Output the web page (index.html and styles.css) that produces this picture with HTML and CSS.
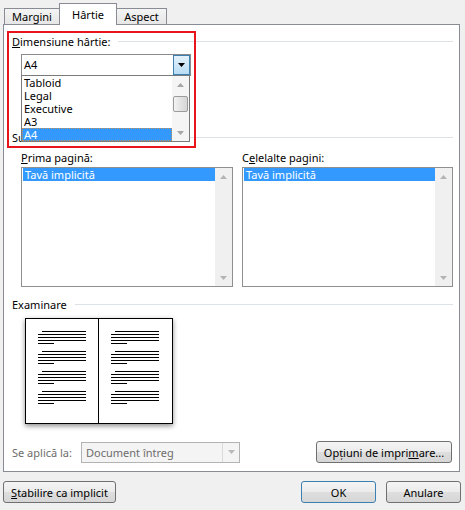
FILE: index.html
```html
<!DOCTYPE html>
<html lang="ro">
<head>
  <meta charset="UTF-8" />
  <title>Iniţializare pagină</title>
  <link rel="stylesheet" href="styles.css">
</head>
<body>
  <div class="tabs">
    <div class="tab tab-margini">Margini</div>
    <div class="tab tab-hartie active">Hârtie</div>
    <div class="tab tab-aspect">Aspect</div>
  </div>

  <div class="panel">
    <div class="group-title"><span><u>D</u>imensiune hârtie:</span><i class="rule"></i></div>

    <div class="combo-wrap">
      <div class="combo">
        <span class="combo-value">A4</span>
        <span class="combo-btn">
          <svg width="7" height="4" viewBox="0 0 7 4"><path d="M0 0H7L3.5 4z" fill="#000"/></svg>
        </span>
      </div>

      <!-- open dropdown, lies over the next group -->
      <div class="droplist">
        <ul class="items">
          <li>Tabloid</li>
          <li>Legal</li>
          <li>Executive</li>
          <li>A3</li>
          <li class="sel focus">A4</li>
        </ul>
        <div class="vscroll">
          <span class="arrow"><svg width="7" height="4" viewBox="0 0 7 4"><path d="M3.5 0L7 4H0z" fill="#a6a6a6"/></svg></span>
          <span class="thumb"></span>
          <span class="track"></span>
          <span class="arrow"><svg width="7" height="4" viewBox="0 0 7 4"><path d="M0 0H7L3.5 4z" fill="#a6a6a6"/></svg></span>
        </div>
      </div>
    </div>

    <div class="group-title source-title"><span>Sursă hârtie:</span><i class="rule"></i></div>

    <div class="trays">
      <div class="tray">
        <div class="tray-label"><u>P</u>rima pagină:</div>
        <div class="listbox">
          <ul class="items">
            <li class="sel">Tavă implicită</li>
          </ul>
          <div class="vscroll">
            <span class="arrow"><svg width="7" height="4" viewBox="0 0 7 4"><path d="M3.5 0L7 4H0z" fill="#b4b4b4"/></svg></span>
            <span class="track"></span>
            <span class="arrow"><svg width="7" height="4" viewBox="0 0 7 4"><path d="M0 0H7L3.5 4z" fill="#b4b4b4"/></svg></span>
          </div>
        </div>
      </div>
      <div class="tray">
        <div class="tray-label">C<u>e</u>lelalte pagini:</div>
        <div class="listbox">
          <ul class="items">
            <li class="sel">Tavă implicită</li>
          </ul>
          <div class="vscroll">
            <span class="arrow"><svg width="7" height="4" viewBox="0 0 7 4"><path d="M3.5 0L7 4H0z" fill="#b4b4b4"/></svg></span>
            <span class="track"></span>
            <span class="arrow"><svg width="7" height="4" viewBox="0 0 7 4"><path d="M0 0H7L3.5 4z" fill="#b4b4b4"/></svg></span>
          </div>
        </div>
      </div>
    </div>

    <div class="group-title preview-title"><span>Examinare</span><i class="rule"></i></div>

    <div class="book">
      <svg width="148" height="106" viewBox="0 0 148 106">
        <defs>
          <path id="para" d="M17 0.5h44M13 3.5h48M13 6.5h48M13 9.5h48M13 12.5h16" stroke="#000" stroke-width="1"/>
        </defs>
        <rect x="0.5" y="0.5" width="147" height="105" fill="#fff" stroke="#000"/>
        <path d="M73.5 0v106" stroke="#000"/>
        <use href="#para" x="0" y="13"/>
        <use href="#para" x="0" y="33"/>
        <use href="#para" x="0" y="53"/>
        <use href="#para" x="0" y="73"/>
        <use href="#para" x="73" y="13"/>
        <use href="#para" x="73" y="33"/>
        <use href="#para" x="73" y="53"/>
        <use href="#para" x="73" y="73"/>
      </svg>
    </div>

    <div class="apply-row">
      <span class="apply-label">Se aplică la:</span>
      <div class="combo disabled">
        <span class="combo-value">Document întreg</span>
        <span class="combo-btn">
          <svg width="7" height="4" viewBox="0 0 7 4"><path d="M0 0H7L3.5 4z" fill="#b9b9b9"/></svg>
        </span>
      </div>
      <button class="btn print-btn">Opțiuni de impri<u>m</u>are...</button>
    </div>

    <div class="highlight"></div>
  </div>

  <div class="footer">
    <button class="btn btn-default-set"><u>S</u>tabilire ca implicit</button>
    <span class="spacer"></span>
    <button class="btn btn-ok">OK</button>
    <button class="btn btn-cancel">Anulare</button>
  </div>
</body>
</html>
```

FILE: styles.css
```css
* {
  margin: 0;
  padding: 0;
  box-sizing: border-box;
}

html, body {
  width: 100%;
  height: 100%;
  overflow: hidden;
}

body {
  background: #f0f0f0;
  font-family: "Noto Sans", "Open Sans", sans-serif;
  font-size: 11px;
  color: #000;
}

u {
  text-decoration: underline;
  text-underline-offset: 1px;
}

ul {
  list-style: none;
}

/* tabs */

.tabs {
  display: flex;
  align-items: flex-end;
  height: 25px;
  padding-left: 4px;
  position: relative;
  z-index: 2;
}

.tab {
  height: 16px;
  margin-bottom: 1px;
  border: 1px solid #898c95;
  border-bottom: none;
  background: linear-gradient(#f4f4f4, #e6e6e6);
  display: flex;
  align-items: center;
  justify-content: center;
  line-height: 1;
}

.tab-margini {
  width: 56px;
}

.tab-hartie {
  width: 58px;
  margin-left: -1px;
}

.tab-aspect {
  width: 51px;
  margin-left: -1px;
}

.tab.active {
  height: 22px;
  margin-bottom: 0;
  background: #fff;
  align-items: flex-start;
  padding-top: 5px;
  position: relative;
  z-index: 1;
}

/* panel */

.panel {
  margin: -1px 0 0 3px;
  width: 457px;
  height: 448px;
  border: 1px solid #898c95;
  background: #fff;
  padding: 9px 6px 0 8px;
  position: relative;
}

.group-title {
  display: flex;
  align-items: center;
  height: 15px;
  line-height: 15px;
  white-space: nowrap;
}

.group-title .rule {
  flex: 1;
  height: 1px;
  margin-left: 8px;
  background: #dde2e7;
}

.source-title {
  margin-top: 54px;
}

.preview-title {
  margin-top: 10px;
}

/* combo boxes */

.combo-wrap {
  position: relative;
  margin: 5px 0 0 9px;
  width: 170px;
}

.combo {
  display: flex;
  align-items: stretch;
  height: 22px;
  border: 1px solid #8a8a8a;
  background: #fff;
}

.combo-value {
  flex: 1;
  padding-left: 2px;
  line-height: 20px;
  white-space: nowrap;
}

.combo-btn {
  width: 17px;
  margin-left: auto;
  border: 1px solid #3c7fb1;
  background: linear-gradient(#e3f2fb, #b9dcf3);
  display: flex;
  align-items: center;
  justify-content: center;
}

.combo.disabled {
  width: 159px;
  height: 21px;
  border-color: #b3b3b3;
  background: #f4f4f4;
  color: #6d6d6d;
}

.combo.disabled .combo-value {
  padding-left: 4px;
  line-height: 19px;
}

.combo.disabled .combo-btn {
  border: none;
  border-left: 1px solid #dadada;
  background: #f4f4f4;
}

.droplist {
  position: absolute;
  top: 21px;
  left: 0;
  width: 169px;
  height: 67px;
  border: 1px solid #7a7a7a;
  background: #fff;
  display: flex;
  z-index: 3;
}

.items {
  flex: 1;
}

.items li {
  height: 13px;
  line-height: 13px;
  padding-left: 2px;
  white-space: nowrap;
}

.items li.sel {
  background: #3399ff;
  color: #fff;
}

.items li.focus {
  outline: 1px dotted #c2905a;
  outline-offset: -1px;
}

/* scroll bars */

.vscroll {
  width: 17px;
  background: #f0f0f0;
  display: flex;
  flex-direction: column;
}

.droplist .vscroll {
  background: #f5f5f5;
}

.vscroll .arrow {
  height: 17px;
  display: flex;
  align-items: center;
  justify-content: center;
}

.vscroll .track {
  flex: 1;
}

.vscroll .thumb {
  height: 16px;
  margin: 3px 1px 0;
  border: 1px solid #9b9b9b;
  border-radius: 2px;
  background: linear-gradient(90deg, #f3f3f3, #e2e2e2 50%, #d6d6d6);
}

/* paper trays */

.trays {
  margin: 5px 0 0 9px;
  display: grid;
  grid-template-columns: 212px 211px;
  column-gap: 9px;
}

.tray-label {
  height: 15px;
  line-height: 15px;
  margin-bottom: 2px;
}

.listbox {
  height: 120px;
  border: 1px solid #8e8f8f;
  display: flex;
}

.listbox .items {
  padding-left: 1px;
}

/* preview */

.book {
  margin: 6px 0 0 13px;
  width: 148px;
  height: 106px;
  box-shadow: 0 2px 5px rgba(0, 0, 0, 0.45);
}

.book svg {
  display: block;
}

.apply-row {
  display: flex;
  align-items: center;
  height: 22px;
  margin-top: 17px;
}

.apply-label {
  width: 69px;
  color: #6d6d6d;
  white-space: nowrap;
}

/* buttons */

.btn {
  font: inherit;
  color: #000;
  height: 22px;
  border: 1px solid #707070;
  border-radius: 3px;
  background: linear-gradient(#f4f4f4, #ebebeb 50%, #dedede 50%, #d6d6d6);
  white-space: nowrap;
}

.print-btn {
  margin: 0 1px 0 auto;
  width: 136px;
}

.footer {
  display: flex;
  gap: 10px;
  padding: 9px 4px 0 3px;
}

.btn-default-set {
  width: 113px;
}

.spacer {
  flex: 1;
}

.btn-ok,
.btn-cancel {
  width: 75px;
}

.btn-ok {
  border-color: #3c7fb1;
}

/* red annotation frame */

.highlight {
  position: absolute;
  top: 6px;
  left: 3px;
  width: 189px;
  height: 117px;
  border: 2px solid #e8141b;
  z-index: 4;
  pointer-events: none;
}
```
